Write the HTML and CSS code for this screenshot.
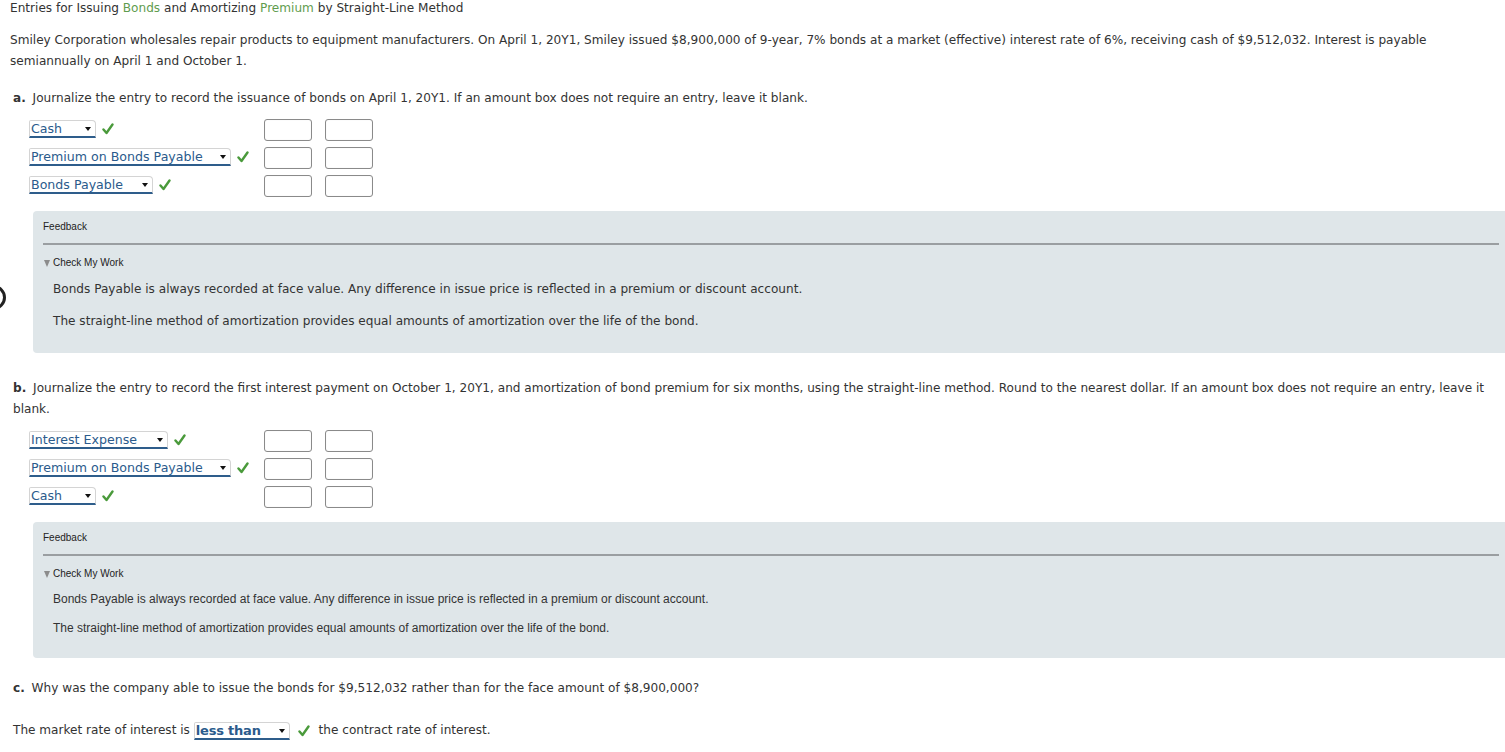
FILE: index.html
```html
<!DOCTYPE html>
<html lang="en">
<head>
<meta charset="utf-8">
<title>Entries for Issuing Bonds and Amortizing Premium by Straight-Line Method</title>
<link rel="stylesheet" href="styles.css">
</head>
<body>
<div class="edge-mark"></div>
<div class="page">
  <h1 class="title">Entries for Issuing <span class="kw">Bonds</span> and Amortizing <span class="kw">Premium</span> by Straight-Line Method</h1>
  <p class="intro">Smiley Corporation wholesales repair products to equipment manufacturers. On April 1, 20Y1, Smiley issued $8,900,000 of 9-year, 7% bonds at a market (effective) interest rate of 6%, receiving cash of $9,512,032. Interest is payable semiannually on April 1 and October 1.</p>

  <p class="question q-a"><b class="qn">a.</b> Journalize the entry to record the issuance of bonds on April 1, 20Y1. If an amount box does not require an entry, leave it blank.</p>
  <div class="journal">
    <div class="jrow">
      <div class="acct"><span class="sel w-cash"><span class="sel-text">Cash</span><span class="arrow"></span></span><svg class="check" viewBox="0 0 12 12"><path d="M1.5 6.5 L4.5 10 L10.5 1.5" /></svg></div>
      <span class="amt"></span><span class="amt"></span>
    </div>
    <div class="jrow">
      <div class="acct"><span class="sel w-premium"><span class="sel-text">Premium on Bonds Payable</span><span class="arrow"></span></span><svg class="check" viewBox="0 0 12 12"><path d="M1.5 6.5 L4.5 10 L10.5 1.5" /></svg></div>
      <span class="amt"></span><span class="amt"></span>
    </div>
    <div class="jrow">
      <div class="acct"><span class="sel w-bonds"><span class="sel-text">Bonds Payable</span><span class="arrow"></span></span><svg class="check" viewBox="0 0 12 12"><path d="M1.5 6.5 L4.5 10 L10.5 1.5" /></svg></div>
      <span class="amt"></span><span class="amt"></span>
    </div>
  </div>

  <div class="feedback fb-a">
    <div class="fb-label">Feedback</div>
    <div class="fb-rule"></div>
    <div class="fb-toggle"><span class="tri"></span>Check My Work</div>
    <p class="fb-text">Bonds Payable is always recorded at face value. Any difference in issue price is reflected in a premium or discount account.</p>
    <p class="fb-text">The straight-line method of amortization provides equal amounts of amortization over the life of the bond.</p>
  </div>

  <p class="question q-b"><b class="qn">b.</b> Journalize the entry to record the first interest payment on October 1, 20Y1, and amortization of bond premium for six months, using the straight-line method. Round to the nearest dollar. If an amount box does not require an entry, leave it blank.</p>
  <div class="journal">
    <div class="jrow">
      <div class="acct"><span class="sel w-interest"><span class="sel-text">Interest Expense</span><span class="arrow"></span></span><svg class="check" viewBox="0 0 12 12"><path d="M1.5 6.5 L4.5 10 L10.5 1.5" /></svg></div>
      <span class="amt"></span><span class="amt"></span>
    </div>
    <div class="jrow">
      <div class="acct"><span class="sel w-premium"><span class="sel-text">Premium on Bonds Payable</span><span class="arrow"></span></span><svg class="check" viewBox="0 0 12 12"><path d="M1.5 6.5 L4.5 10 L10.5 1.5" /></svg></div>
      <span class="amt"></span><span class="amt"></span>
    </div>
    <div class="jrow">
      <div class="acct"><span class="sel w-cash"><span class="sel-text">Cash</span><span class="arrow"></span></span><svg class="check" viewBox="0 0 12 12"><path d="M1.5 6.5 L4.5 10 L10.5 1.5" /></svg></div>
      <span class="amt"></span><span class="amt"></span>
    </div>
  </div>

  <div class="feedback fb-b">
    <div class="fb-label">Feedback</div>
    <div class="fb-rule"></div>
    <div class="fb-toggle"><span class="tri"></span>Check My Work</div>
    <p class="fb-text">Bonds Payable is always recorded at face value. Any difference in issue price is reflected in a premium or discount account.</p>
    <p class="fb-text">The straight-line method of amortization provides equal amounts of amortization over the life of the bond.</p>
  </div>

  <p class="question q-c"><b class="qn">c.</b> Why was the company able to issue the bonds for $9,512,032 rather than for the face amount of $8,900,000?</p>
  <p class="answer">The market rate of interest is <span class="sel w-less"><span class="sel-text">less than</span><span class="arrow"></span></span><svg class="check" viewBox="0 0 12 12"><path d="M1.5 6.5 L4.5 10 L10.5 1.5" /></svg> the contract rate of interest.</p>
</div>
</body>
</html>
```
FILE: styles.css
```css
html, body {
  margin: 0;
  padding: 0;
  background: #ffffff;
}
body {
  font-family: "DejaVu Sans", Verdana, sans-serif;
  font-size: 12.1px;
  color: #333333;
  overflow: hidden;
  position: relative;
}
.page {
  padding: 0 10px;
}
.edge-mark {
  position: absolute;
  left: -19px;
  top: 285px;
  width: 19px;
  height: 19px;
  border: 3px solid #222;
  border-radius: 50%;
}
.title {
  font-size: 12.1px;
  font-weight: normal;
  line-height: 16px;
  margin: 0;
}
.kw {
  color: #5f9c4e;
}
.intro {
  margin: 14px 0 0;
  line-height: 21px;
}
.question {
  margin: 0;
  padding-left: 3px;
  line-height: 21px;
}
.qn {
  color: #333;
  margin-right: 3px;
}
.q-a { margin-top: 16px; }
.q-b { margin-top: 25px; }
.q-c { margin-top: 20px; }
.journal {
  margin-top: 10px;
  display: flex;
  flex-direction: column;
  gap: 6px;
}
.jrow {
  display: flex;
  align-items: flex-start;
  height: 22px;
}
.acct {
  width: 254px;
  padding-left: 19px;
  box-sizing: border-box;
  display: flex;
  align-items: center;
  gap: 6px;
  margin-top: 1px;
}
.sel {
  display: inline-flex;
  align-items: center;
  justify-content: space-between;
  box-sizing: border-box;
  height: 18px;
  border: 1px solid #d4d4d4;
  border-bottom: 2px solid #2e5d8b;
  border-radius: 2px 4px 0 0;
  color: #2b5b8c;
  font-size: 12.6px;
  line-height: 15px;
  padding: 0 4px 0 1px;
  vertical-align: middle;
}
.w-cash { width: 67px; }
.w-premium { width: 202px; }
.w-bonds { width: 124px; }
.w-interest { width: 139px; }
.w-less { width: 96px; }
.w-less .sel-text {
  font-size: 13px;
  font-weight: 600;
  letter-spacing: -0.2px;
}
.arrow {
  width: 0;
  height: 0;
  border-left: 3px solid transparent;
  border-right: 3px solid transparent;
  border-top: 4px solid #111;
  margin-top: 1px;
}
.check {
  width: 12px;
  height: 12px;
  flex: none;
}
.check path {
  fill: none;
  stroke: #4a9a3b;
  stroke-width: 2.4;
  stroke-linecap: round;
  stroke-linejoin: round;
}
.amt {
  display: block;
  width: 48px;
  height: 22px;
  box-sizing: border-box;
  border: 1px solid #8a8a8a;
  border-radius: 3px;
  background: #fff;
  box-shadow: inset 0 0 1px rgba(0,0,0,0.15);
  margin-right: 13px;
}
.feedback {
  margin: 14px -10px 0 23px;
  background: #dfe6e9;
  border-radius: 4px 0 0 4px;
  padding: 10px 6px 0 10px;
}
.fb-a { padding-bottom: 21px; }
.fb-b { padding-bottom: 22px; }
.fb-label, .fb-toggle {
  font-family: "Liberation Sans", Arial, sans-serif;
  font-size: 10px;
  line-height: 12px;
  color: #222;
}
.fb-rule {
  height: 2px;
  background: #9a9ea1;
  margin-top: 10px;
}
.fb-toggle {
  margin-top: 12px;
  display: flex;
  align-items: center;
}
.tri {
  width: 0;
  height: 0;
  border-left: 3px solid transparent;
  border-right: 3px solid transparent;
  border-top: 7px solid #8c8c8c;
  margin: 0 3px 0 1px;
}
.fb-text {
  margin: 0;
  padding-left: 10px;
}
.fb-a .fb-text {
  line-height: 21px;
  margin-top: 11px;
}
.fb-a .fb-toggle + .fb-text {
  margin-top: 10px;
}
.fb-b .fb-text {
  font-family: "Liberation Sans", Arial, sans-serif;
  font-size: 12px;
  line-height: 15px;
  margin-top: 14px;
  color: #333;
}
.fb-b .fb-toggle + .fb-text {
  margin-top: 12px;
}
.answer {
  margin: 21px 0 0;
  padding-left: 3px;
  line-height: 21px;
}
.answer .sel {
  margin-right: 8px;
}
.answer .check {
  vertical-align: middle;
  margin-right: 5px;
}
```
